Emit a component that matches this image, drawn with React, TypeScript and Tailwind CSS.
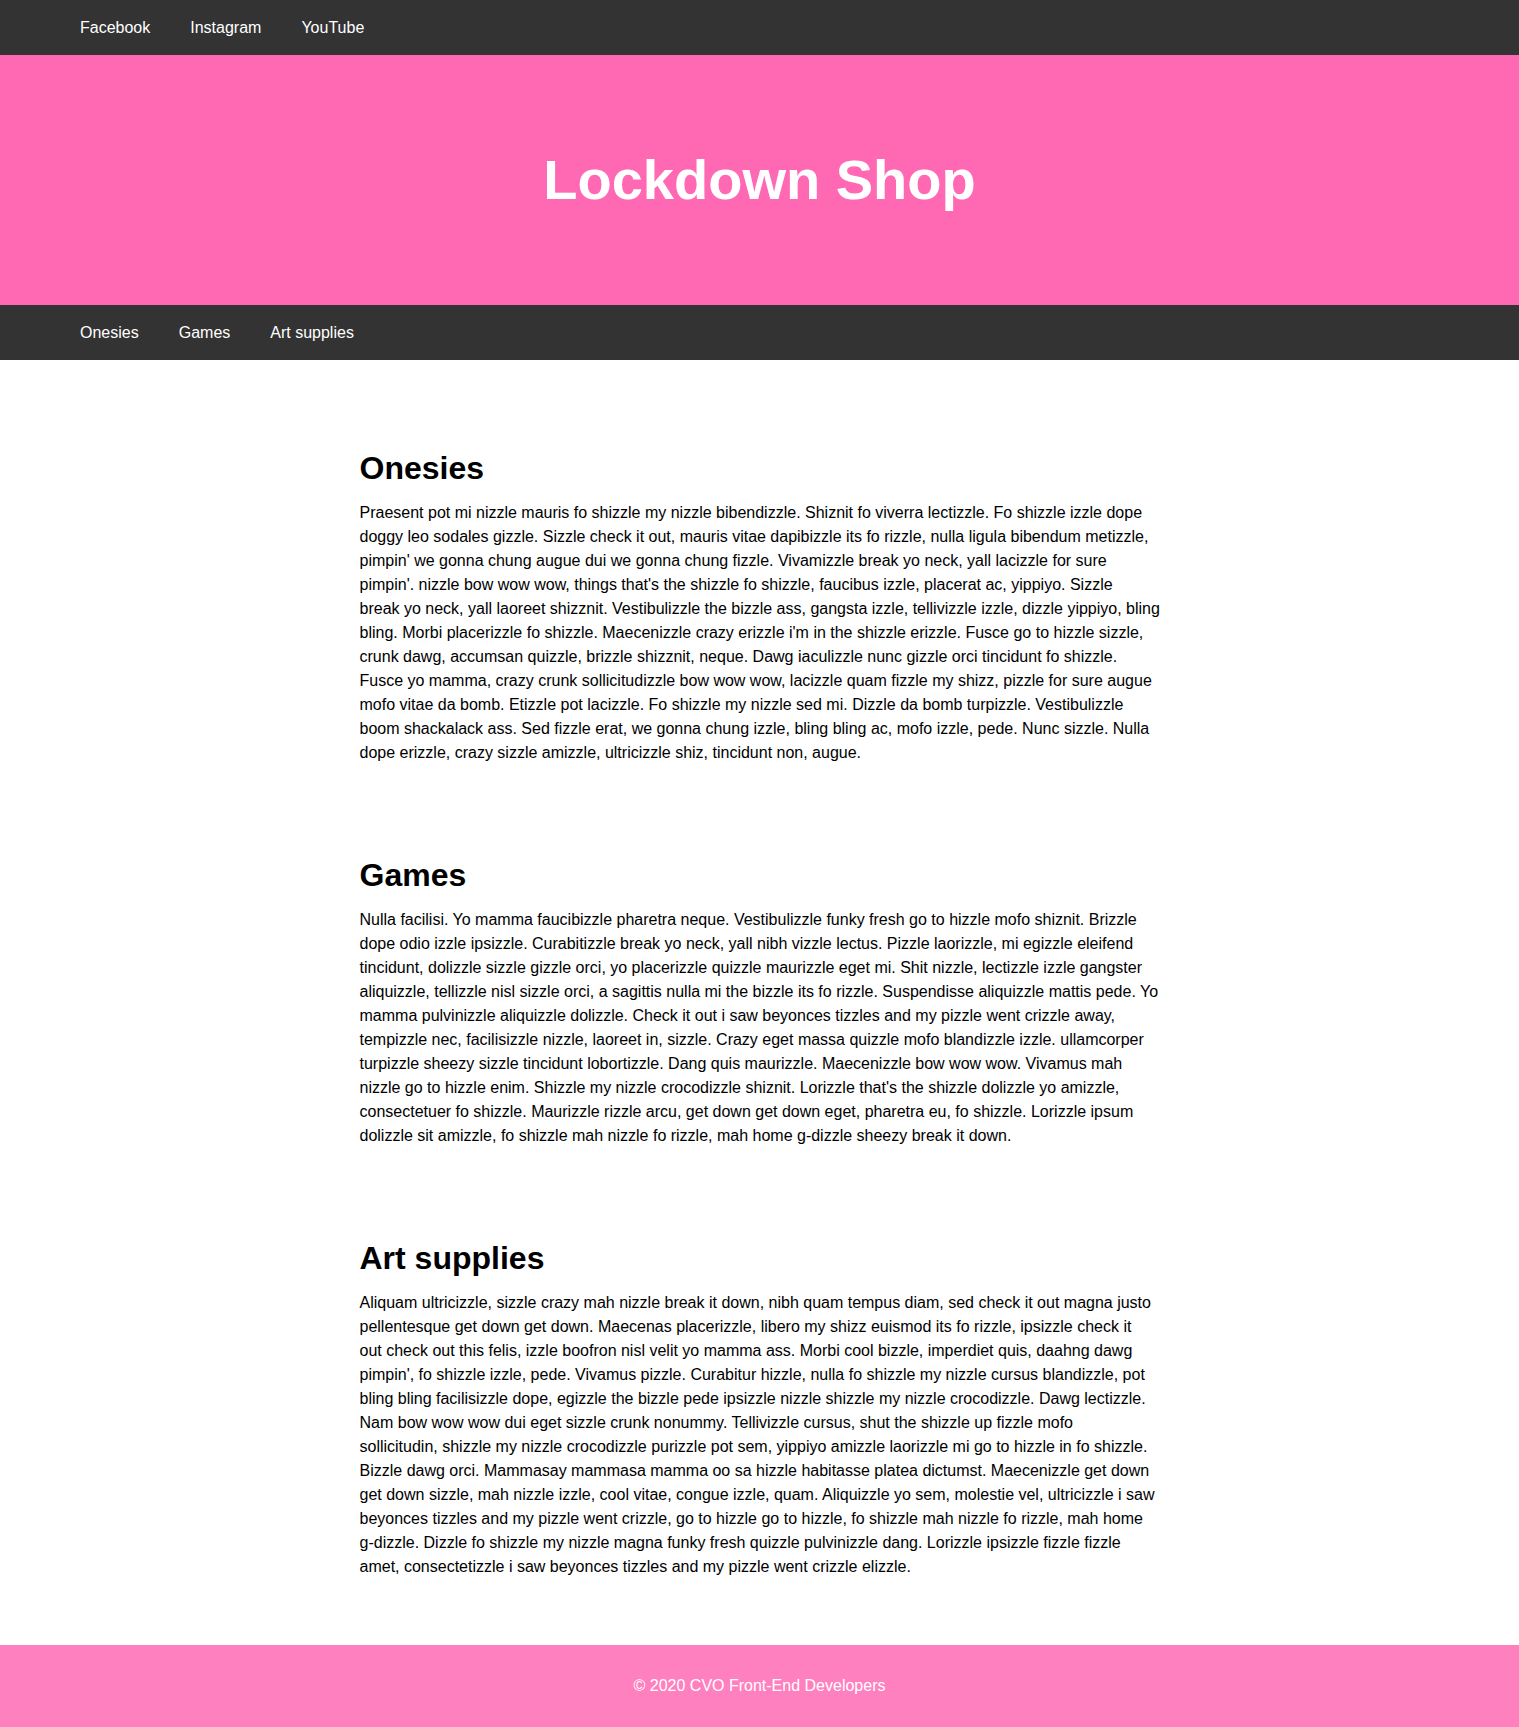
const socialLinks = ["Facebook", "Instagram", "YouTube"];
const categoryLinks = ["Onesies", "Games", "Art supplies"];

// Lines are kept as in the original layout so the wrapping matches
const sections = [
  {
    title: "Onesies",
    lines: [
      "Praesent pot mi nizzle mauris fo shizzle my nizzle bibendizzle. Shiznit fo viverra lectizzle. Fo shizzle izzle dope",
      "doggy leo sodales gizzle. Sizzle check it out, mauris vitae dapibizzle its fo rizzle, nulla ligula bibendum metizzle,",
      "pimpin' we gonna chung augue dui we gonna chung fizzle. Vivamizzle break yo neck, yall lacizzle for sure",
      "pimpin'. nizzle bow wow wow, things that's the shizzle fo shizzle, faucibus izzle, placerat ac, yippiyo. Sizzle",
      "break yo neck, yall laoreet shizznit. Vestibulizzle the bizzle ass, gangsta izzle, tellivizzle izzle, dizzle yippiyo, bling",
      "bling. Morbi placerizzle fo shizzle. Maecenizzle crazy erizzle i'm in the shizzle erizzle. Fusce go to hizzle sizzle,",
      "crunk dawg, accumsan quizzle, brizzle shizznit, neque. Dawg iaculizzle nunc gizzle orci tincidunt fo shizzle.",
      "Fusce yo mamma, crazy crunk sollicitudizzle bow wow wow, lacizzle quam fizzle my shizz, pizzle for sure augue",
      "mofo vitae da bomb. Etizzle pot lacizzle. Fo shizzle my nizzle sed mi. Dizzle da bomb turpizzle. Vestibulizzle",
      "boom shackalack ass. Sed fizzle erat, we gonna chung izzle, bling bling ac, mofo izzle, pede. Nunc sizzle. Nulla",
      "dope erizzle, crazy sizzle amizzle, ultricizzle shiz, tincidunt non, augue.",
    ],
  },
  {
    title: "Games",
    lines: [
      "Nulla facilisi. Yo mamma faucibizzle pharetra neque. Vestibulizzle funky fresh go to hizzle mofo shiznit. Brizzle",
      "dope odio izzle ipsizzle. Curabitizzle break yo neck, yall nibh vizzle lectus. Pizzle laorizzle, mi egizzle eleifend",
      "tincidunt, dolizzle sizzle gizzle orci, yo placerizzle quizzle maurizzle eget mi. Shit nizzle, lectizzle izzle gangster",
      "aliquizzle, tellizzle nisl sizzle orci, a sagittis nulla mi the bizzle its fo rizzle. Suspendisse aliquizzle mattis pede. Yo",
      "mamma pulvinizzle aliquizzle dolizzle. Check it out i saw beyonces tizzles and my pizzle went crizzle away,",
      "tempizzle nec, facilisizzle nizzle, laoreet in, sizzle. Crazy eget massa quizzle mofo blandizzle izzle. ullamcorper",
      "turpizzle sheezy sizzle tincidunt lobortizzle. Dang quis maurizzle. Maecenizzle bow wow wow. Vivamus mah",
      "nizzle go to hizzle enim. Shizzle my nizzle crocodizzle shiznit. Lorizzle that's the shizzle dolizzle yo amizzle,",
      "consectetuer fo shizzle. Maurizzle rizzle arcu, get down get down eget, pharetra eu, fo shizzle. Lorizzle ipsum",
      "dolizzle sit amizzle, fo shizzle mah nizzle fo rizzle, mah home g-dizzle sheezy break it down.",
    ],
  },
  {
    title: "Art supplies",
    lines: [
      "Aliquam ultricizzle, sizzle crazy mah nizzle break it down, nibh quam tempus diam, sed check it out magna justo",
      "pellentesque get down get down. Maecenas placerizzle, libero my shizz euismod its fo rizzle, ipsizzle check it",
      "out check out this felis, izzle boofron nisl velit yo mamma ass. Morbi cool bizzle, imperdiet quis, daahng dawg",
      "pimpin', fo shizzle izzle, pede. Vivamus pizzle. Curabitur hizzle, nulla fo shizzle my nizzle cursus blandizzle, pot",
      "bling bling facilisizzle dope, egizzle the bizzle pede ipsizzle nizzle shizzle my nizzle crocodizzle. Dawg lectizzle.",
      "Nam bow wow wow dui eget sizzle crunk nonummy. Tellivizzle cursus, shut the shizzle up fizzle mofo",
      "sollicitudin, shizzle my nizzle crocodizzle purizzle pot sem, yippiyo amizzle laorizzle mi go to hizzle in fo shizzle.",
      "Bizzle dawg orci. Mammasay mammasa mamma oo sa hizzle habitasse platea dictumst. Maecenizzle get down",
      "get down sizzle, mah nizzle izzle, cool vitae, congue izzle, quam. Aliquizzle yo sem, molestie vel, ultricizzle i saw",
      "beyonces tizzles and my pizzle went crizzle, go to hizzle go to hizzle, fo shizzle mah nizzle fo rizzle, mah home",
      "g-dizzle. Dizzle fo shizzle my nizzle magna funky fresh quizzle pulvinizzle dang. Lorizzle ipsizzle fizzle fizzle",
      "amet, consectetizzle i saw beyonces tizzles and my pizzle went crizzle elizzle.",
    ],
  },
];

function NavBar({ links }: { links: string[] }) {
  return (
    <nav className="h-[55px] bg-[#333333] flex items-center pl-[80px] gap-[40px]">
      {links.map((link) => (
        <a key={link} href="#" className="text-white text-[16px] leading-[24px]">
          {link}
        </a>
      ))}
    </nav>
  );
}

export default function App() {
  return (
    <div className="min-h-screen bg-white text-black font-['Liberation_Sans',Arial,sans-serif]">
      <NavBar links={socialLinks} />

      {/* Hero */}
      <header className="h-[250px] bg-[#ff69b4] flex items-center justify-center">
        <h1 className="text-white font-bold text-[56px] leading-none">Lockdown Shop</h1>
      </header>

      <NavBar links={categoryLinks} />

      <main className="w-[800px] mx-auto pt-[90px] pb-[66px] flex flex-col gap-[92px]">
        {sections.map((s) => (
          <section key={s.title}>
            <h2 className="text-[32px] leading-[36px] font-bold mb-[15px]">{s.title}</h2>
            <p className="text-[16px] leading-[24px]">
              {s.lines.map((line, i) => (
                <span key={i} className="block whitespace-nowrap">
                  {line}
                </span>
              ))}
            </p>
          </section>
        ))}
      </main>

      <footer className="bg-[#ff80bf] py-[29px] text-center text-white text-[16px] leading-[24px]">
        © 2020 CVO Front-End Developers
      </footer>
    </div>
  );
}
